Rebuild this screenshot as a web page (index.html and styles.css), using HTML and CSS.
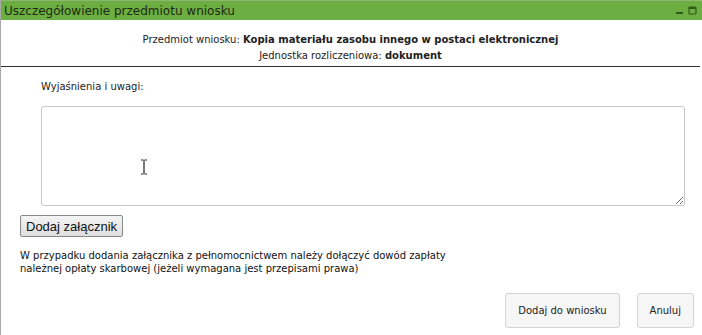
FILE: index.html
```html
<!DOCTYPE html>
<html lang="pl">
<head>
<meta charset="UTF-8">
<title>Uszczegółowienie przedmiotu wniosku</title>
<link rel="stylesheet" href="styles.css">
</head>
<body>

<div class="dialog">
  <div class="titlebar">
    <span class="title">Uszczegółowienie przedmiotu wniosku</span>
    <span class="controls">
      <svg width="22" height="10" viewBox="0 0 22 10">
        <rect x="0" y="6" width="7" height="2" fill="#2f5d1a"/>
        <rect x="13" y="1" width="7" height="7" rx="1" fill="none" stroke="#2f5d1a" stroke-width="1.2"/>
        <rect x="13" y="1" width="7" height="2" fill="#2f5d1a"/>
      </svg>
    </span>
  </div>

  <div class="summary">
    <div>Przedmiot wniosku: <b>Kopia materiału zasobu innego w postaci elektronicznej</b></div>
    <div>Jednostka rozliczeniowa: <b>dokument</b></div>
  </div>

  <div class="content">
    <label class="notes-label" for="notes">Wyjaśnienia i uwagi:</label>
    <div class="notes-wrap">
      <textarea id="notes" class="notes"></textarea>
      <svg class="ibeam" width="8" height="16" viewBox="0 0 8 16">
        <path d="M1 1h2.5M4.5 1H7M4 1.5v13M1 15h2.5M4.5 15H7" stroke="#222" stroke-width="1.2" fill="none"/>
      </svg>
    </div>

    <button class="attach">Dodaj załącznik</button>

    <p class="hint">W przypadku dodania załącznika z pełnomocnictwem należy dołączyć dowód zapłaty<br>należnej opłaty skarbowej (jeżeli wymagana jest przepisami prawa)</p>

    <div class="actions">
      <button class="btn">Dodaj do wniosku</button>
      <button class="btn">Anuluj</button>
    </div>
  </div>
</div>

</body>
</html>
```

FILE: styles.css
```css
body {
  margin: 0;
  background: #fff;
  font-family: "DejaVu Sans", Verdana, sans-serif;
  color: #222;
}
.dialog {
  width: 702px;
  height: 335px;
  border-left: 1px solid #a9a9a9;
  box-sizing: border-box;
  background: #fff;
}
.titlebar {
  display: flex;
  justify-content: space-between;
  align-items: center;
  height: 19px;
  padding: 0 4px 0 3px;
  background: #6cae42;
  border-top: 1px solid #8cb874;
}
.title {
  font-size: 12px;
  color: #1c2a12;
}
.controls {
  display: flex;
  align-items: center;
}
.summary {
  font-size: 10px;
  text-align: center;
  line-height: 16px;
  padding: 12px 0 2px;
  border-bottom: 1px solid #333;
  margin-right: 2px;
}
.content {
  padding: 0 17px 0 19px;
  font-size: 10px;
}
.notes-label {
  display: block;
  margin: 14px 0 0 21px;
  line-height: 12px;
}
.notes-wrap {
  position: relative;
  margin: 13px 0 0 21px;
}
.notes {
  display: block;
  width: 100%;
  height: 100px;
  box-sizing: border-box;
  border: 1px solid #c8c8c8;
  border-radius: 3px;
  resize: vertical;
}
.ibeam {
  position: absolute;
  left: 99px;
  top: 53px;
}
.attach {
  margin-top: 9px;
  height: 22px;
  padding: 0 5px;
  font-family: "Liberation Sans", Arial, sans-serif;
  font-size: 13px;
  color: #111;
  background: linear-gradient(#f4f4f4, #dedede);
  border: 1px solid #8a8a8a;
  border-radius: 2px;
}
.hint {
  margin: 12px 0 0;
  line-height: 13px;
  font-size: 10px;
  color: #111;
}
.actions {
  display: flex;
  justify-content: flex-end;
  gap: 17px;
  margin-top: 18px;
  margin-right: -9px;
}
.btn {
  height: 35px;
  padding: 0 12px;
  font-family: "DejaVu Sans", Verdana, sans-serif;
  font-size: 10px;
  color: #222;
  background: #f6f6f6;
  border: 1px solid #d4d4d4;
  border-radius: 3px;
}
```
